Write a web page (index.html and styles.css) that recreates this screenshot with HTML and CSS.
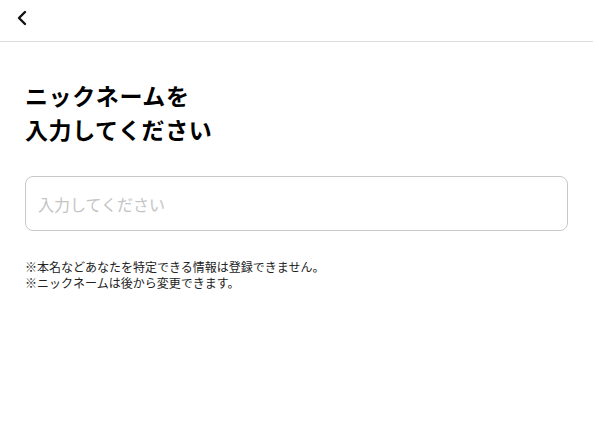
FILE: index.html
```html
<!DOCTYPE html>
<html lang="ja">
<head>
    <meta charset="UTF-8">
    <meta name="viewport" content="width=device-width, initial-scale=1.0">
    <title>ニックネーム登録</title>
    <link rel="stylesheet" href="styles.css">
</head>
<body>
    <header class="top-bar">
        <button class="back-button" aria-label="戻る">
            <svg width="12" height="16" viewBox="0 0 12 16">
                <path d="M9 2 L3 8 L9 14" fill="none" stroke="#111" stroke-width="2.4" stroke-linecap="round" stroke-linejoin="round"/>
            </svg>
        </button>
    </header>
    <main class="content">
        <h1 class="title">ニックネームを<br>入力してください</h1>
        <input class="nickname-input" type="text" placeholder="入力してください">
        <div class="notes">
            <p>※本名などあなたを特定できる情報は登録できません。</p>
            <p>※ニックネームは後から変更できます。</p>
        </div>
    </main>
</body>
</html>
```
FILE: styles.css
```css
body {
    margin: 0;
    padding: 0;
    font-family: "Noto Sans CJK JP", "Noto Sans", sans-serif;
    background-color: #fff;
    color: #000;
}

.top-bar {
    height: 41px;
    border-bottom: 1px solid #dcdcdc;
    display: flex;
    align-items: center;
    padding-left: 14px;
}

.back-button {
    background: none;
    border: none;
    padding: 0;
    margin-top: -6px;
    width: 16px;
    height: 20px;
    display: flex;
    align-items: center;
    justify-content: center;
    cursor: pointer;
}

.content {
    padding: 0 25px;
}

.title {
    margin: 36px 0 0;
    font-size: 23px;
    font-weight: bold;
    line-height: 34px;
    letter-spacing: 0.6px;
}

.nickname-input {
    display: block;
    box-sizing: border-box;
    width: 100%;
    height: 55px;
    margin-top: 30px;
    padding: 0 12px;
    border: 1px solid #c8c8c8;
    border-radius: 8px;
    font-family: inherit;
    font-size: 16px;
    color: #111;
    outline: none;
}

.nickname-input::placeholder {
    color: #c4c4c4;
}

.notes {
    margin-top: 28px;
}

.notes p {
    margin: 0;
    font-size: 12px;
    line-height: 16px;
    color: #222;
}
```
